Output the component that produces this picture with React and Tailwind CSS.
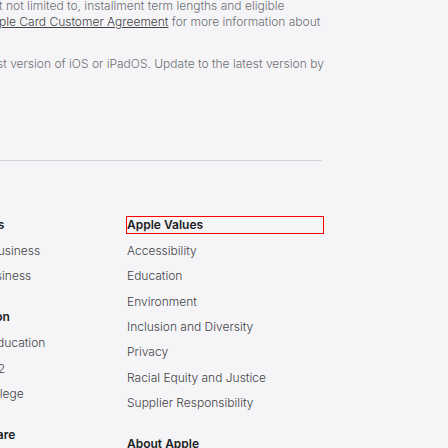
import React from 'react';

const forCols = [
  { title: 'For Business', links: ['Apple and Business', 'Shop for Business'] },
  { title: 'For Education', links: ['Apple and Education', 'Shop for K-12', 'Shop for College'] },
  { title: 'For Healthcare', links: [] },
];

const values = [
  'Accessibility',
  'Education',
  'Environment',
  'Inclusion and Diversity',
  'Privacy',
  'Racial Equity and Justice',
  'Supplier Responsibility',
];

function Section({ title, links, boxed, first }) {
  return (
    <div className={first ? '' : 'mt-[25px]'}>
      <h3
        className={
          'h-[16px] leading-[16px] font-semibold text-[#1d1d1f] ' +
          (boxed ? 'outline outline-1 outline-[#ff0000]' : '')
        }
      >
        {title}
      </h3>
      <ul className="mt-[10px] flex flex-col gap-[9.33px]">
        {links.map((l) => (
          <li key={l} className="h-[16px] leading-[16px] font-[350] text-[#424245] whitespace-nowrap">
            {l}
          </li>
        ))}
      </ul>
    </div>
  );
}

export default function App() {
  return (
    <div
      className="w-[448px] h-[448px] overflow-hidden bg-[#f5f5f7] text-[12px] font-[350]"
      style={{ fontFamily: 'Inter, "Noto Sans", sans-serif' }}
    >
      <div className="mt-[-2px] text-[#6e6e73] leading-[16px] whitespace-nowrap">
        <p className="ml-[-1px]">t not limited to, installment term lengths and eligible</p>
        <p className="ml-[-1px]">
          <span className="underline text-[#424245]">ple Card Customer Agreement</span> for more information about
        </p>
        <p className="ml-[-3px] mt-[26px]">st version of iOS or iPadOS. Update to the latest version by</p>
      </div>

      <div className="ml-[-70px] w-[392px] mt-[88px] border-t border-[#d2d2d7]" />

      <div className="ml-[-70px] mt-[56px] flex">
        <div className="w-[197px]">
          {forCols.map((c, i) => (
            <Section key={c.title} title={c.title} links={c.links} first={i === 0} />
          ))}
        </div>
        <div className="w-[196px]">
          <Section title="Apple Values" links={values} boxed first />
          <Section title="About Apple" links={[]} />
        </div>
      </div>
    </div>
  );
}
